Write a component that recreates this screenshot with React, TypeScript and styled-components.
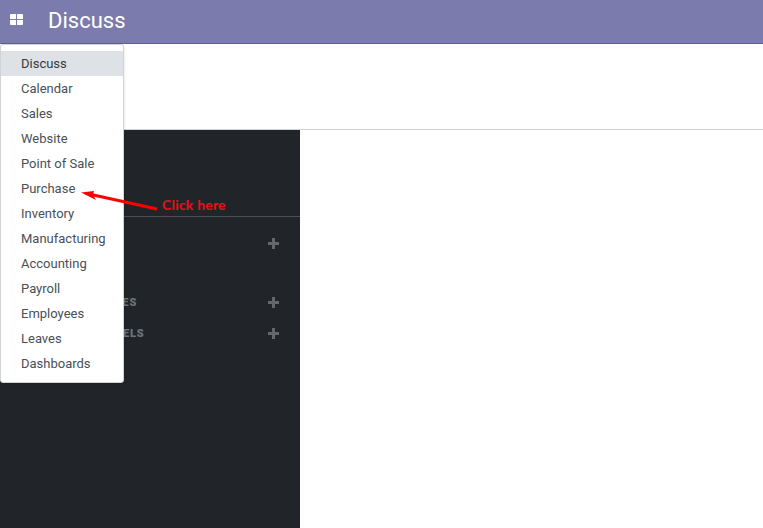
import React from "react";
import styled, { createGlobalStyle } from "styled-components";

const apps = [
  "Discuss",
  "Calendar",
  "Sales",
  "Website",
  "Point of Sale",
  "Purchase",
  "Inventory",
  "Manufacturing",
  "Accounting",
  "Payroll",
  "Employees",
  "Leaves",
  "Dashboards"
];

const GlobalStyle = createGlobalStyle`
  html, body {
    margin: 0;
    padding: 0;
    background: #fff;
    font-family: Roboto, "Liberation Sans", sans-serif;
  }
`;

const Page = styled.div`
  position: relative;
  display: flex;
  flex-direction: column;
  width: 763px;
  height: 528px;
  overflow: hidden;
`;

const Navbar = styled.header`
  display: flex;
  align-items: center;
  box-sizing: border-box;
  height: 44px;
  background: #7c7bad;
  border-bottom: 1px solid #5f5e97;
  color: #fff;
`;

const AppsIcon = styled.svg`
  width: 13px;
  height: 11px;
  margin: 0 0 4px 10px;
`;

const Title = styled.h1`
  margin: 0 0 1px 25px;
  font-size: 22px;
  font-weight: 400;
  line-height: 28px;
`;

const ControlPanel = styled.div`
  box-sizing: border-box;
  height: 86px;
  background: #fff;
  border-bottom: 1px solid #ced4da;
`;

const Content = styled.div`
  display: flex;
  flex: 1;
`;

const Sidebar = styled.aside`
  display: flex;
  flex-direction: column;
  width: 300px;
  background: #212529;
`;

const Divider = styled.div`
  height: 1px;
  margin-top: 86px;
  background: #495057;
`;

const SectionHeader = styled.div<{ $gap: number }>`
  display: flex;
  align-items: center;
  justify-content: space-between;
  height: 16px;
  margin-top: ${(p) => p.$gap}px;
  padding: 0 21px 0 26px;
  color: #6c757d;
  font-size: 11px;
  font-weight: 900;
  letter-spacing: 0.9px;
`;

const PlusIcon = styled.svg`
  width: 11px;
  height: 11px;
  fill: #62686e;
`;

const Main = styled.main`
  flex: 1;
  background: #fff;
`;

const AppsMenu = styled.nav`
  position: absolute;
  top: 44px;
  left: 0;
  box-sizing: border-box;
  width: 124px;
  height: 339px;
  padding-top: 6px;
  background: #fff;
  border: 1px solid #ced4da;
  border-radius: 3px;
  box-shadow: 0 1px 3px rgba(0, 0, 0, 0.15);
`;

const MenuItem = styled.div<{ $active?: boolean }>`
  height: 25px;
  padding-left: 20px;
  background: ${(p) => (p.$active ? "#dee2e6" : "transparent")};
  color: ${(p) => (p.$active ? "#343a40" : "#495057")};
  font-size: 13px;
  line-height: 25px;
`;

const Annotation = styled.svg`
  position: absolute;
  top: 186px;
  left: 78px;
  width: 82px;
  height: 28px;
`;

const AnnotationLabel = styled.span`
  position: absolute;
  top: 196px;
  left: 162px;
  color: #e8101a;
  font-family: Lato, sans-serif;
  font-size: 14px;
  font-weight: 700;
  letter-spacing: 0.2px;
  line-height: 18px;
`;

const Plus = () => (
  <PlusIcon viewBox="0 0 11 11">
    <path d="M4 0h3v4h4v3H7v4H4V7H0V4h4z" />
  </PlusIcon>
);

export default function App() {
  return (
    <Page>
      <GlobalStyle />
      <Navbar>
        <AppsIcon viewBox="0 0 13 11">
          <path
            fill="#fff"
            d="M0 1a1 1 0 0 1 1-1h5v5H0zM7 0h5a1 1 0 0 1 1 1v4H7zM0 6h6v5H1a1 1 0 0 1-1-1zM7 6h6v4a1 1 0 0 1-1 1H7z"
          />
        </AppsIcon>
        <Title>Discuss</Title>
      </Navbar>
      <ControlPanel />
      <Content>
        <Sidebar>
          <Divider />
          <SectionHeader $gap={18}>
            <span>CHANNELS</span>
            <Plus />
          </SectionHeader>
          <SectionHeader $gap={43}>
            <span>DIRECT MESSAGES</span>
            <Plus />
          </SectionHeader>
          <SectionHeader $gap={15}>
            <span>PRIVATE CHANNELS</span>
            <Plus />
          </SectionHeader>
        </Sidebar>
        <Main />
      </Content>
      <AppsMenu>
        {apps.map((app, i) => (
          <MenuItem key={app} $active={i === 0}>
            {app}
          </MenuItem>
        ))}
      </AppsMenu>
      <Annotation viewBox="0 0 82 28">
        <path d="M79 23L13 8.5" stroke="#f00" strokeWidth="3" fill="none" />
        <path d="M3 6.5L16 5L15 9L18 14z" fill="#f00" />
      </Annotation>
      <AnnotationLabel>Click here</AnnotationLabel>
    </Page>
  );
}
